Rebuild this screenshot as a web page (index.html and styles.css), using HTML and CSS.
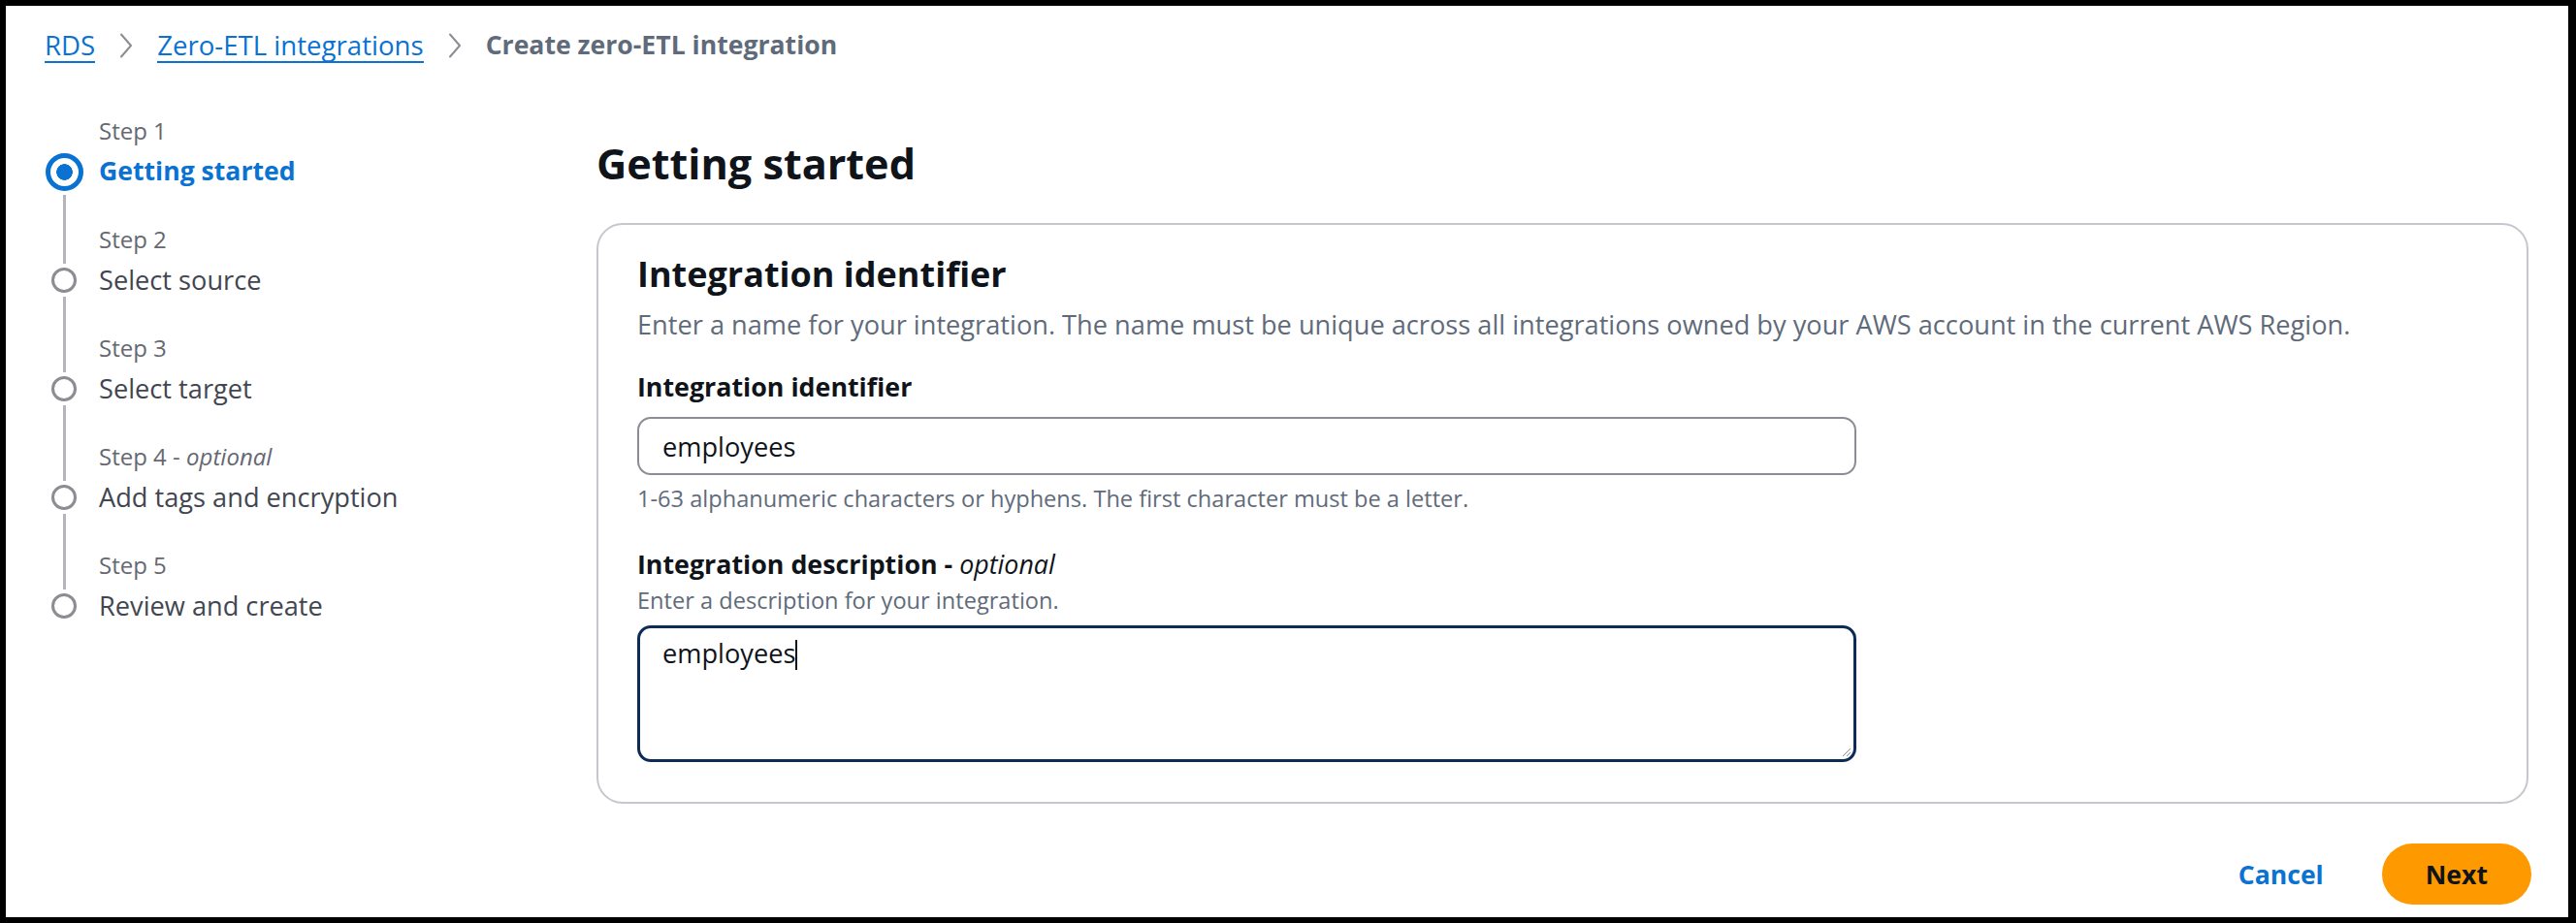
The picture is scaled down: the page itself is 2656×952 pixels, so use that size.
FILE: index.html
```html
<!DOCTYPE html>
<html lang="en">
<head>
<meta charset="utf-8">
<title>Create zero-ETL integration</title>
<link rel="stylesheet" href="styles.css">
</head>
<body>
<div class="frame">
  <nav class="breadcrumbs" aria-label="Breadcrumbs">
    <a class="crumb-link" href="#">RDS</a>
    <svg class="sep" width="16" height="26" viewBox="0 0 16 26" aria-hidden="true"><path d="M3 1.5 L13 13 L3 24.5" fill="none" stroke="#8c8c94" stroke-width="2" stroke-linejoin="round" stroke-linecap="round"/></svg>
    <a class="crumb-link" href="#">Zero-ETL integrations</a>
    <svg class="sep" width="16" height="26" viewBox="0 0 16 26" aria-hidden="true"><path d="M3 1.5 L13 13 L3 24.5" fill="none" stroke="#8c8c94" stroke-width="2" stroke-linejoin="round" stroke-linecap="round"/></svg>
    <span class="crumb-current">Create zero-ETL integration</span>
  </nav>

  <div class="layout">
    <ol class="steps">
      <li class="step">
        <div class="rail"><span class="dot dot-active"></span></div>
        <div class="step-text">
          <span class="step-label">Step 1</span>
          <span class="step-title step-title-active">Getting started</span>
        </div>
      </li>
      <li class="step">
        <div class="rail"><span class="dot"></span></div>
        <div class="step-text">
          <span class="step-label">Step 2</span>
          <span class="step-title">Select source</span>
        </div>
      </li>
      <li class="step">
        <div class="rail"><span class="dot"></span></div>
        <div class="step-text">
          <span class="step-label">Step 3</span>
          <span class="step-title">Select target</span>
        </div>
      </li>
      <li class="step">
        <div class="rail"><span class="dot"></span></div>
        <div class="step-text">
          <span class="step-label">Step 4 - <i>optional</i></span>
          <span class="step-title">Add tags and encryption</span>
        </div>
      </li>
      <li class="step">
        <div class="rail"><span class="dot"></span></div>
        <div class="step-text">
          <span class="step-label">Step 5</span>
          <span class="step-title">Review and create</span>
        </div>
      </li>
    </ol>

    <main class="main">
      <h1 class="page-title">Getting started</h1>
      <section class="card">
        <h2 class="card-title">Integration identifier</h2>
        <p class="card-desc">Enter a name for your integration. The name must be unique across all integrations owned by your AWS account in the current AWS Region.</p>

        <div class="field">
          <label class="field-label" for="ident">Integration identifier</label>
          <input class="input" id="ident" type="text" value="employees">
          <p class="hint">1-63 alphanumeric characters or hyphens. The first character must be a letter.</p>
        </div>

        <div class="field field-desc">
          <div class="field-label">Integration description - <i class="opt">optional</i></div>
          <p class="field-sub">Enter a description for your integration.</p>
          <div class="textarea" role="textbox" aria-multiline="true">employees<span class="caret"></span>
            <svg class="grip" width="12" height="12" viewBox="0 0 12 12" aria-hidden="true"><path d="M11 3 L3 11 M11 7 L7 11" stroke="#8c8c94" stroke-width="1" fill="none"/></svg>
          </div>
        </div>
      </section>

      <div class="actions">
        <button class="btn-link" type="button">Cancel</button>
        <button class="btn-primary" type="button">Next</button>
      </div>
    </main>
  </div>
</div>
</body>
</html>
```

FILE: styles.css
```css
html {
  background: #000;
}

body {
  margin: 0;
  font-family: "Open Sans", "Noto Sans", sans-serif;
  color: #0f141a;
}

.frame {
  margin: 6px 8px 6px 6px;
  height: 940px;
  box-sizing: border-box;
  background: #fff;
  padding: 23px 41px 0 40px;
}

/* Breadcrumbs */
.breadcrumbs {
  display: flex;
  align-items: flex-start;
  font-size: 27.6px;
  line-height: 34px;
}

.crumb-link {
  display: inline-block;
  color: #0972d3;
  text-decoration: none;
  border-bottom: 2px solid #0972d3;
}

.sep {
  margin: 5px 24px 0;
  flex: none;
}

.crumb-current {
  color: #5f6b7a;
  font-weight: 700;
  font-size: 26.6px;
}

/* Layout */
.layout {
  display: grid;
  grid-template-columns: 529px 1fr;
  column-gap: 40px;
}

/* Steps */
.steps {
  list-style: none;
  margin: 56px 0 0;
  padding: 0;
}

.step {
  display: flex;
  column-gap: 16px;
}

.rail {
  width: 40px;
  flex: none;
  display: flex;
  flex-direction: column;
  align-items: center;
}

.rail::before,
.rail::after {
  content: "";
  flex: 1;
  width: 3px;
  background: #b4b4bb;
}

.step:first-child .rail::before,
.step:last-child .rail::after {
  visibility: hidden;
}

.dot {
  flex: none;
  box-sizing: border-box;
  width: 26px;
  height: 26px;
  margin: 4px 0;
  border: 3.4px solid #8c8c94;
  border-radius: 50%;
  background: #fff;
}

.dot-active {
  width: 39px;
  height: 39px;
  border: 5px solid #0972d3;
  background: radial-gradient(circle, #0972d3 0 8px, #fff 8.6px);
}

.step-text {
  display: flex;
  flex-direction: column;
  gap: 10px;
  padding-bottom: 39px;
}

.step-label {
  font-size: 24px;
  line-height: 28px;
  color: #656871;
}

.step-title {
  font-size: 27.2px;
  line-height: 35px;
  color: #424650;
}

.step-title-active {
  color: #0972d3;
  font-weight: 700;
  font-size: 26.6px;
}

/* Main */
.main {
  padding-top: 78px;
}

.page-title {
  margin: 0;
  font-size: 43.2px;
  line-height: 52px;
  font-weight: 700;
  color: #0f141a;
}

.card {
  margin-top: 35px;
  border: 2px solid #c6c6cd;
  border-radius: 27px;
  padding: 32px 40px 41px;
}

.card-title {
  margin: 0;
  font-size: 36px;
  line-height: 38px;
  font-weight: 700;
}

.card-desc {
  margin: 16px 0 0;
  font-size: 27.2px;
  line-height: 34px;
  color: #5f6b7a;
}

.field {
  margin-top: 30px;
  max-width: 1257px;
}

.field-desc {
  margin-top: 37px;
}

.field-label {
  display: block;
  font-size: 26.8px;
  line-height: 34px;
  font-weight: 700;
  color: #0f141a;
}

.opt {
  font-weight: 400;
}

.input {
  display: block;
  box-sizing: border-box;
  width: 100%;
  height: 60px;
  margin-top: 14px;
  padding: 0 24px;
  border: 2px solid #8c8c94;
  border-radius: 14px;
  font-family: inherit;
  font-size: 27.2px;
  color: #0f141a;
  background: #fff;
  outline: none;
}

.hint {
  margin: 11px 0 0;
  font-size: 23.6px;
  line-height: 27.2px;
  color: #5f6b7a;
}

.field-sub {
  margin: 7px 0 0;
  font-size: 23.6px;
  line-height: 27.2px;
  color: #5f6b7a;
}

.textarea {
  position: relative;
  box-sizing: border-box;
  height: 141px;
  margin-top: 12px;
  padding: 9px 23px;
  border: 3px solid #0c2c57;
  border-radius: 14px;
  font-size: 27.2px;
  line-height: 34px;
  color: #0f141a;
}

.caret {
  display: inline-block;
  width: 1.5px;
  height: 31px;
  background: #0f141a;
  vertical-align: -7px;
}

.grip {
  position: absolute;
  right: 2px;
  bottom: 2px;
}

/* Actions */
.actions {
  margin-top: 41px;
  margin-right: -3px;
  display: flex;
  justify-content: flex-end;
  align-items: center;
  gap: 30px;
}

.btn-link {
  border: none;
  background: none;
  padding: 0 30px;
  font-family: inherit;
  font-size: 26.6px;
  font-weight: 700;
  color: #0972d3;
}

.btn-primary {
  height: 63px;
  padding: 0 45px;
  border: none;
  border-radius: 32px;
  background: #ff9900;
  font-family: inherit;
  font-size: 26.6px;
  font-weight: 700;
  color: #0f141a;
}
```
